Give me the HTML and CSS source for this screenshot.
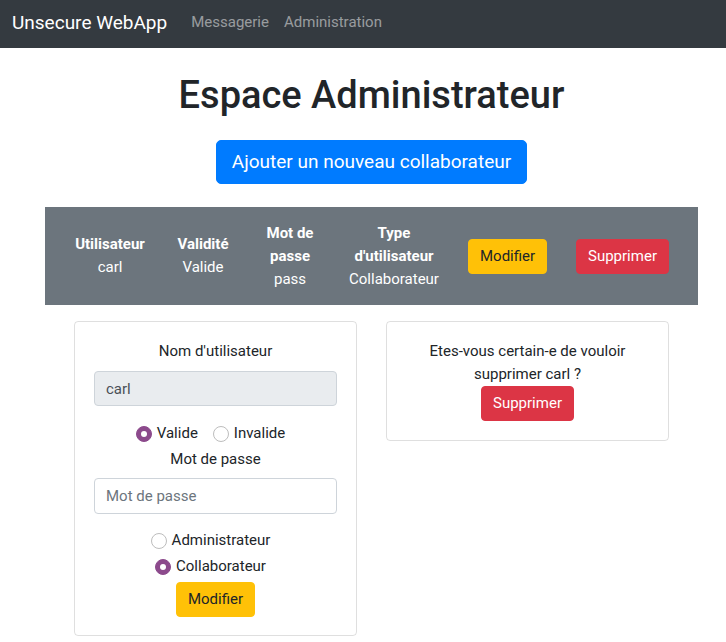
FILE: index.html
```html
<!DOCTYPE html>
<html lang="fr">
<head>
<meta charset="utf-8">
<title>Unsecure WebApp</title>
<link rel="stylesheet" href="styles.css">
</head>
<body>
<nav class="navbar">
  <a class="brand" href="#">Unsecure WebApp</a>
  <a class="nav-link first" href="#">Messagerie</a>
  <a class="nav-link" href="#">Administration</a>
</nav>
<main class="main">
  <h1 class="title">Espace Administrateur</h1>
  <div class="add-wrap"><button class="btn btn-lg btn-primary">Ajouter un nouveau collaborateur</button></div>
  <div class="user-row">
    <div class="cell c-user"><strong>Utilisateur</strong><span>carl</span></div>
    <div class="cell c-valid"><strong>Validité</strong><span>Valide</span></div>
    <div class="cell c-pass"><strong>Mot de passe</strong><span>pass</span></div>
    <div class="cell c-type"><strong>Type d'utilisateur</strong><span>Collaborateur</span></div>
    <button class="btn btn-warning row-edit">Modifier</button>
    <button class="btn btn-danger row-del">Supprimer</button>
  </div>
  <div class="cards">
    <form class="card card-edit">
      <div class="label">Nom d'utilisateur</div>
      <input class="input" type="text" value="carl" disabled>
      <div class="radios first-radios">
        <label class="radio"><span class="dot checked"></span>Valide</label>
        <label class="radio"><span class="dot"></span>Invalide</label>
      </div>
      <div class="label">Mot de passe</div>
      <input class="input input-pass" type="password" placeholder="Mot de passe">
      <div class="radio-col">
        <label class="radio"><span class="dot"></span>Administrateur</label>
        <label class="radio"><span class="dot checked"></span>Collaborateur</label>
      </div>
      <button class="btn btn-warning" type="button">Modifier</button>
    </form>
    <div class="card card-del">
      <p class="confirm">Etes-vous certain-e de vouloir supprimer carl ?</p>
      <button class="btn btn-danger">Supprimer</button>
    </div>
  </div>
</main>
</body>
</html>
```

FILE: styles.css
```css
* { box-sizing: border-box; }
body {
  margin: 0;
  font-family: Roboto, "Liberation Sans", sans-serif;
  font-size: 15px;
  line-height: 23px;
  color: #212529;
  background: #fff;
}
.navbar {
  height: 48px;
  background: #343a40;
  display: flex;
  align-items: center;
  padding: 0 0 4px 12px;
}
.brand {
  color: #fff;
  font-size: 19px;
  text-decoration: none;
}
.nav-link {
  color: rgba(255,255,255,.5);
  text-decoration: none;
  margin-left: 15px;
}
.nav-link.first { margin-left: 24px; }
.main {
  width: 653px;
  margin-left: 45px;
}
.title {
  margin: 23px 0 0;
  text-align: center;
  font-size: 38px;
  font-weight: 500;
  line-height: 48px;
}
.add-wrap {
  display: flex;
  justify-content: center;
  margin-top: 21px;
}
.btn {
  font-family: inherit;
  font-size: 15px;
  line-height: 23px;
  border: 1px solid transparent;
  border-radius: 4px;
  padding: 5px 11px;
  cursor: pointer;
}
.btn-lg {
  font-size: 19px;
  line-height: 28px;
  padding: 7px 15px;
  border-radius: 5px;
}
.btn-primary { background: #007bff; border-color: #007bff; color: #fff; }
.btn-warning { background: #ffc107; border-color: #ffc107; color: #212529; }
.btn-danger { background: #dc3545; border-color: #dc3545; color: #fff; }
.user-row {
  margin-top: 23px;
  height: 98px;
  background: #6c757d;
  color: #fff;
  display: flex;
  align-items: center;
  padding: 0 29px 0 30px;
}
.cell {
  display: flex;
  flex-direction: column;
  align-items: center;
  text-align: center;
  flex: none;
}
.cell strong { font-weight: 700; }
.c-user { width: 70px; }
.c-valid { width: 52px; margin-left: 32px; }
.c-pass { width: 56px; margin-left: 33px; }
.c-type { width: 92px; margin-left: 30px; }
.row-edit { margin-left: 28px; width: 79px; }
.row-del { margin-left: 29px; width: 93px; }
.cards {
  display: flex;
  align-items: flex-start;
  gap: 29px;
  padding: 0 29px;
  margin-top: 16px;
}
.card {
  flex: 1;
  border: 1px solid rgba(0,0,0,.125);
  border-radius: 4px;
  padding: 18px 19px 18px;
  display: flex;
  flex-direction: column;
  align-items: center;
  text-align: center;
  margin: 0;
}
.card-del { padding-bottom: 19px; }
.label { line-height: 23px; }
.input {
  width: 100%;
  height: 35px;
  margin-top: 8px;
  border: 1px solid #ced4da;
  border-radius: 4px;
  padding: 0 11px;
  font-family: inherit;
  font-size: 15px;
  color: #495057;
  background: #fff;
}
.input:disabled { background: #e9ecef; color: #495057; }
.input-pass { height: 36px; margin-top: 7px; }
.input::placeholder { color: #6c757d; }
.radios {
  display: flex;
  gap: 15px;
  margin-top: 16px;
  margin-bottom: 3px;
}
.radio {
  display: inline-flex;
  align-items: center;
  gap: 5px;
}
.radios .radio:last-child { margin-right: 10px; }
.radio-col .radio { margin-right: 10px; }
.dot {
  width: 16px;
  height: 16px;
  border-radius: 50%;
  border: 1px solid #bdbdbd;
  background: #fff;
  display: inline-block;
  position: relative;
  flex: none;
}
.dot.checked {
  background: #8c4a8c;
  border-color: #8c4a8c;
}
.dot.checked::after {
  content: "";
  position: absolute;
  left: 4px;
  top: 4px;
  width: 6px;
  height: 6px;
  border-radius: 50%;
  background: #fff;
}
.radio-col {
  display: flex;
  flex-direction: column;
  align-items: center;
  gap: 3px;
  margin-top: 15px;
  margin-bottom: 4px;
}
.confirm { margin: 0; }
```
